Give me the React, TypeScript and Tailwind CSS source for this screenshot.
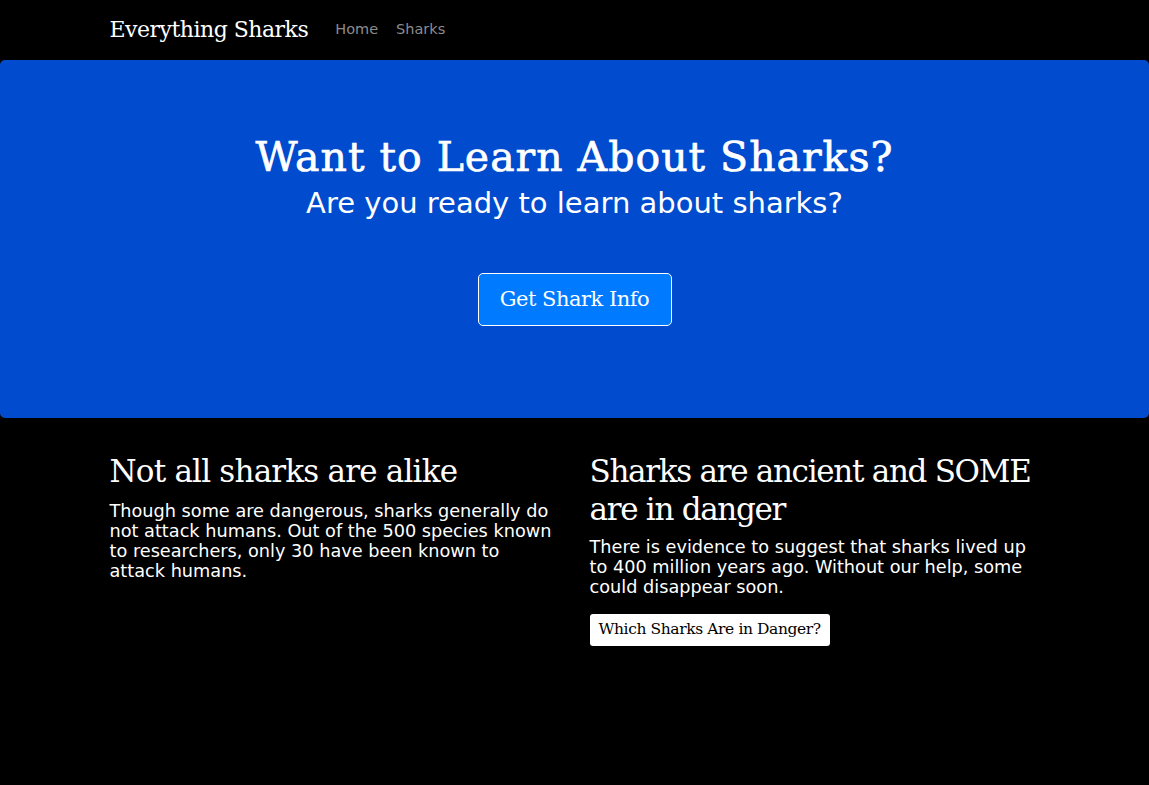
export default function App() {
  const serif = "font-['DejaVu_Serif',serif]";
  return (
    <div className="min-h-[785px] bg-black text-white font-['DejaVu_Sans',sans-serif]">
      <nav className="h-[60px] flex items-center">
        <div className="w-[930px] mx-auto flex items-center">
          <a className={`${serif} text-[22px] tracking-[-0.5px] text-white mr-[27px] leading-[30px]`}>Everything Sharks</a>
          <a className="text-[14.5px] text-[#8c8c8c] mr-[18px]">Home</a>
          <a className="text-[14.5px] text-[#8c8c8c]">Sharks</a>
        </div>
      </nav>
      <section className="bg-[#004bce] rounded-[5px] h-[358px] flex flex-col items-center pt-[72px]">
        <h1 className={`${serif} text-[41px] leading-[50px] font-normal tracking-[1px] [-webkit-text-stroke:0.7px_white]`}>Want to Learn About Sharks?</h1>
        <p className="text-[29px] leading-[36px] mt-[3px]">Are you ready to learn about sharks?</p>
        <button className={`${serif} mt-[52px] bg-[#007bff] border border-white rounded-[5px] w-[194px] h-[53px] text-[21px] tracking-[-0.5px] text-white`}>Get Shark Info</button>
      </section>
      <div className="w-[960px] mx-auto flex pt-[34px]">
        <div className="w-1/2 px-[15px]">
          <h2 className={`${serif} text-[31px] leading-[38px] tracking-[-0.8px] mb-[11px]`}>Not all sharks are alike</h2>
          <p className="text-[17.7px] leading-[20px]">Though some are dangerous, sharks generally do not attack humans. Out of the 500 species known to researchers, only 30 have been known to attack humans.</p>
        </div>
        <div className="w-1/2 px-[15px]">
          <h2 className={`${serif} text-[31px] leading-[38px] tracking-[-1.3px] mb-[9px] whitespace-nowrap`}>Sharks are ancient and SOME<br />are in danger</h2>
          <p className="text-[17.7px] leading-[20px]">There is evidence to suggest that sharks lived up to 400 million years ago. Without our help, some could disappear soon.</p>
          <button className={`${serif} mt-[17px] bg-white text-black rounded-[3px] h-[32px] px-[9px] text-[15.5px] tracking-[-0.4px]`}>Which Sharks Are in Danger?</button>
        </div>
      </div>
    </div>
  );
}
